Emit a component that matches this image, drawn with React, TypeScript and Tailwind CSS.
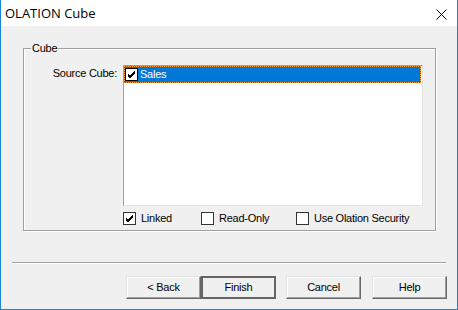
import React from "react";

function Check() {
  return (
    <svg width="9" height="9" viewBox="0 0 9 9" className="block">
      <path d="M1 4 L3 6 L8 1 M1 5 L3 7 L8 2 M1 6 L3 8 L8 3" stroke="#000" strokeWidth="1" fill="none" shapeRendering="crispEdges" />
    </svg>
  );
}

function CheckBox({ checked, label, width }: { checked: boolean; label: string; width: string }) {
  return (
    <div className={`flex items-center ${width}`}>
      <div className="w-[13px] h-[13px] border border-[#333] bg-white flex items-center justify-center shrink-0">
        {checked && <Check />}
      </div>
      <span className="ml-[5px] text-[11px] leading-[13px] text-black">{label}</span>
    </div>
  );
}

function Btn({ label, isDefault }: { label: string; isDefault?: boolean }) {
  return (
    <button
      className={`w-[75px] h-[23px] bg-[#f0f0f0] text-[11px] text-black flex items-center justify-center ${
        isDefault
          ? "border-2 border-[#646464]"
          : "border border-t-[#e3e3e3] border-l-[#e3e3e3] border-r-[#696969] border-b-[#696969] shadow-[inset_-1px_-1px_0_#a0a0a0,inset_1px_1px_0_#ffffff]"
      }`}
    >
      {label}
    </button>
  );
}

export default function App() {
  return (
    <div className="w-[458px] h-[310px] border-x border-b border-[#1883d7] flex flex-col font-['Liberation_Sans',Arial,sans-serif] tracking-[-0.25px] bg-[#f0f0f0] overflow-hidden">
      {/* title bar */}
      <div className="h-[26px] bg-white flex items-center justify-between pl-[4px] pr-[10px] shrink-0">
        <span className="text-[13px] tracking-normal text-black font-['Open_Sans',sans-serif] pt-[1px]">OLATION Cube</span>
        <svg width="11" height="11" viewBox="0 0 11 11" className="mt-[2px]">
          <path d="M0.5 0.5 L10.5 10.5 M10.5 0.5 L0.5 10.5" stroke="#000" strokeWidth="1" />
        </svg>
      </div>

      {/* group box */}
      <div className="relative ml-[22px] mt-[22px] w-[413px] h-[183px] border border-[#a0a0a0] shadow-[inset_1px_1px_0_#ffffff,1px_1px_0_#ffffff] shrink-0">
        <span className="absolute left-[7px] top-[-7px] px-[1px] bg-[#f0f0f0] text-[11px] leading-[13px] text-black">Cube</span>
        <div className="flex mt-[16px]">
          <div className="w-[93px] text-right text-[11px] leading-[13px] text-black pt-[2px]">Source Cube:</div>
          <div className="ml-[6px] flex flex-col">
            <div className="w-[300px] h-[141px] bg-white border border-t-[#a0a0a0] border-l-[#a0a0a0] border-r-[#e3e3e3] border-b-[#e3e3e3]">
              <div className="h-[17px] mr-[1px] bg-[#0078d7] border border-dotted border-[#f89a3a] flex items-center">
                <div className="w-[13px] h-[13px] border border-black bg-white flex items-center justify-center">
                  <Check />
                </div>
                <span className="ml-[2px] text-[11px] leading-[13px] text-white">Sales</span>
              </div>
            </div>
            <div className="flex mt-[6px]">
              <CheckBox checked label="Linked" width="w-[78px]" />
              <CheckBox checked={false} label="Read-Only" width="w-[95px]" />
              <CheckBox checked={false} label="Use Olation Security" width="w-[120px]" />
            </div>
          </div>
        </div>
      </div>

      {/* separator */}
      <div className="ml-[11px] mt-[31px] w-[434px] h-[2px] border-t border-t-[#a0a0a0] border-b border-b-white shrink-0" />

      {/* buttons */}
      <div className="flex mt-[12px] ml-[125px] shrink-0">
        <Btn label="< Back" />
        <Btn label="Finish" isDefault />
        <div className="w-[10px]" />
        <Btn label="Cancel" />
        <div className="w-[11px]" />
        <Btn label="Help" />
      </div>
    </div>
  );
}
